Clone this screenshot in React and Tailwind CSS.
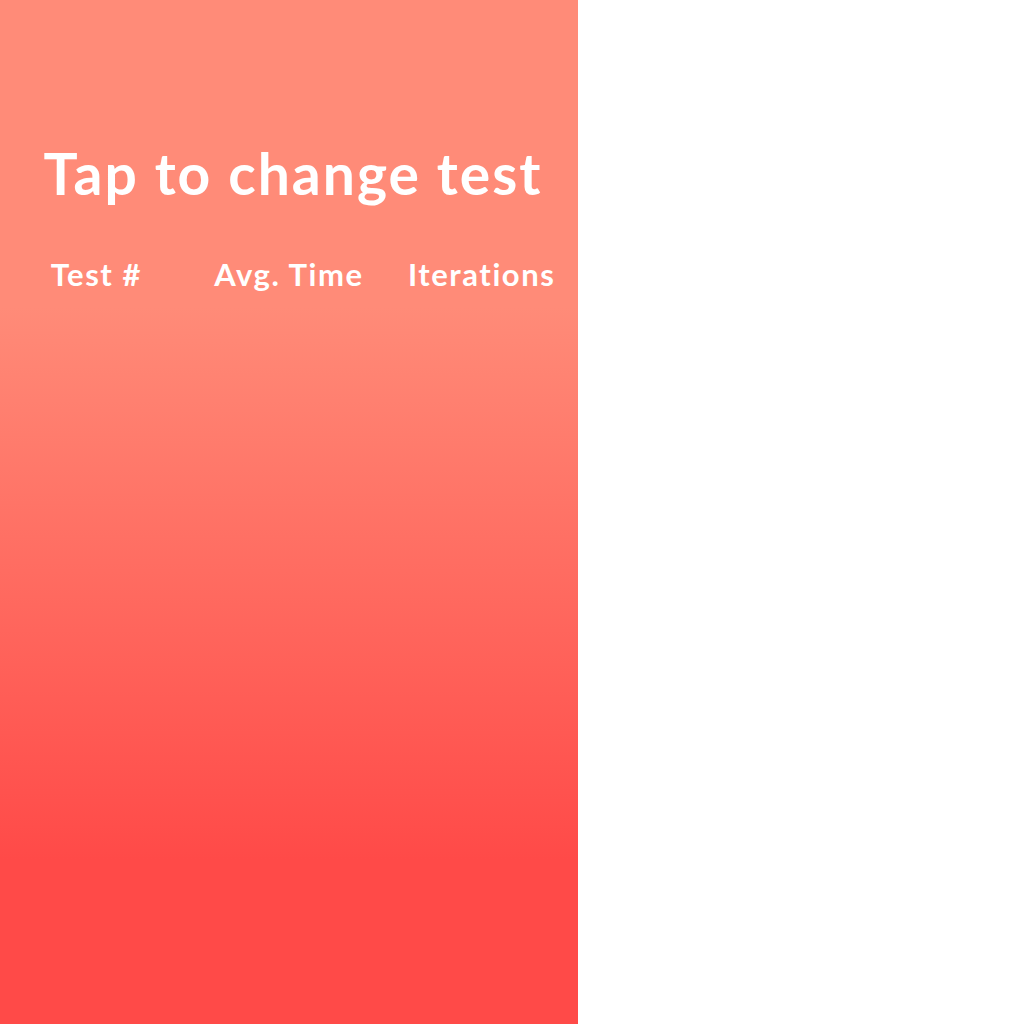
import React from "react";

const columns = ["Test #", "Avg. Time", "Iterations"];

const App = () => {
  return (
    <div className="flex w-full h-screen bg-white" style={{ fontFamily: "Lato, 'Open Sans', sans-serif" }}>
      <div className="flex flex-col w-[578px] h-full bg-[linear-gradient(to_bottom,#ff8b78_0%,#ff8b78_30%,#ff4a48_84%,#ff4a48_100%)] pt-[137px]">
        <h1 className="pl-2 text-center text-white text-[57px] font-bold leading-[72px] tracking-[0.035em]">Tap to change test</h1>
        <div className="grid grid-cols-3 mt-[46px]">
          {columns.map((c) => (
            <p key={c} className="text-center text-white text-[31px] font-bold leading-[38px] tracking-[0.05em]">
              {c}
            </p>
          ))}
        </div>
      </div>
      <div className="flex-1" />
    </div>
  );
};

export default App;
